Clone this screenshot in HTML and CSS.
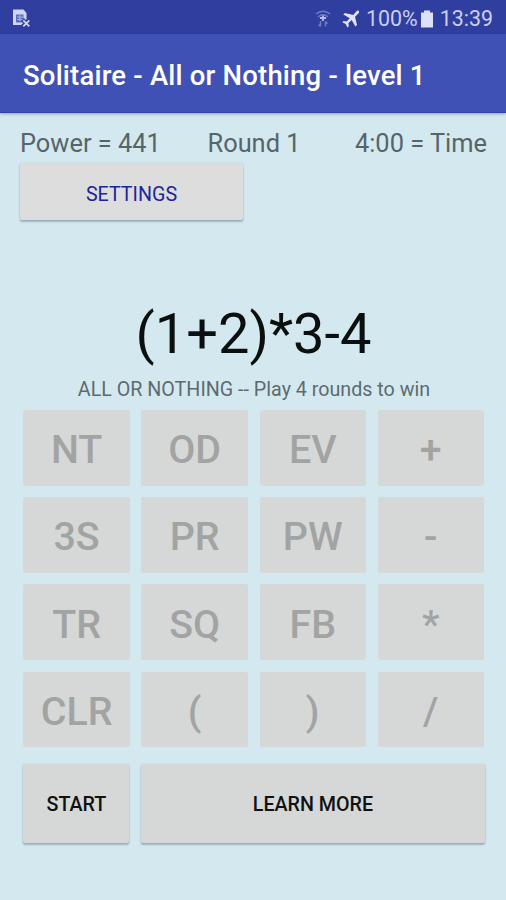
FILE: index.html
```html
<!DOCTYPE html>
<html lang="en">
<head>
<meta charset="utf-8">
<title>Solitaire - All or Nothing - level 1</title>
<link rel="stylesheet" href="styles.css">
</head>
<body>
<div class="status">
  <svg class="sim" width="18" height="20" viewBox="0 0 18 20">
    <path fill="#cfd5f2" d="M1 .5h10.500L14.500 4v12H1z"/>
    <path fill="#5f6bb8" d="M4 5.500h7.500v8H4z"/>
    <path fill="#aab3e0" d="M5 7.500h6v1H5zM5 10h6v1H5zM7.300 6h1v6h-1z"/>
    <path stroke="#303f9f" stroke-width="4" d="M10.500 10.500l7 7M17.500 10.500l-7 7"/>
    <path stroke="#cfd5f2" stroke-width="1.800" d="M11.300 11.300l6 6M17.300 11.300l-6 6"/>
  </svg>
  <div class="status-right">
    <svg class="wifi" width="16" height="18" viewBox="0 0 16 18" fill="none" stroke="#6f7bc4" stroke-width="1.500">
      <path d="M1 4q7-5.500 14 0M3.200 6.800q4.800-4 9.600 0"/>
      <path stroke="#b7bfeb" stroke-width="1.800" d="M5 8h6M8 5.500v5.500"/>
      <path d="M5.500 11v5.500m-2-2l2 2M10.500 16.500v-5m2 2l-2-2"/>
    </svg>
    <svg class="plane" width="18" height="18" viewBox="0 0 18 18">
      <path fill="#e0e4f8" d="M16.600.7c.9.800.6 2-.3 2.900L13 6.700l2 8.300-1.500 1.500-3.900-6.400-3.300 3.200.5 3-1.300 1.200-1.800-3.400L.4 12.300l1.200-1.200 3 .4 3.200-3.300L1.300 4.500 2.800 3l8.400 1.900 3.100-3.300c.8-.9 1.600-1.500 2.300-.9z"/>
    </svg>
    <span class="percent">100%</span>
    <svg class="battery" width="12" height="18" viewBox="0 0 12 18"><path fill="#dde2f8" d="M0 2.500h3V.5h6v2h3v15H0z"/></svg>
    <span class="clock">13:39</span>
  </div>
</div>
<header class="bar"><h1>Solitaire - All or Nothing - level 1</h1></header>
<main>
  <div class="stats"><span class="power">Power = 441</span><span class="round">Round 1</span><span class="time">4:00 = Time</span></div>
  <button class="raised settings">SETTINGS</button>
  <div class="expression">(1+2)*3-4</div>
  <p class="hint">ALL OR NOTHING -- Play 4 rounds to win</p>
  <div class="keys">
    <button disabled>NT</button><button disabled>OD</button><button disabled>EV</button><button disabled>+</button>
    <button disabled>3S</button><button disabled>PR</button><button disabled>PW</button><button disabled>-</button>
    <button disabled>TR</button><button disabled>SQ</button><button disabled>FB</button><button disabled>*</button>
    <button disabled>CLR</button><button disabled>(</button><button disabled>)</button><button disabled>/</button>
  </div>
  <div class="actions"><button class="raised">START</button><button class="raised learn">LEARN MORE</button></div>
</main>
</body>
</html>
```
FILE: styles.css
```css
* { box-sizing: border-box; }
body {
  margin: 0;
  height: 900px;
  overflow: hidden;
  background: #d4e9ef;
  font-family: Roboto, sans-serif;
}
.status {
  display: flex;
  justify-content: space-between;
  align-items: center;
  height: 34px;
  padding: 3px 13px 0 12px;
  background: #303f9f;
  color: #c9cff0;
  font-size: 21.4px;
}
.status svg { display: block; flex: none; }
.status-right { display: flex; align-items: center; }
.plane { margin: 0 6px 0 11px; }
.battery { margin: 0 6.500px 0 3.500px; }
.bar {
  position: relative;
  height: 79px;
  padding-left: 23px;
  background: #3f51b5;
  border-bottom: 1px solid #3141a5;
  box-shadow: 0 1px 3px rgba(0, 0, 0, .3);
}
h1 {
  margin: 0;
  color: #fff;
  font-size: 27.500px;
  font-weight: 500;
  letter-spacing: .2px;
  line-height: 83px;
  white-space: nowrap;
}
main { padding: 0 21px 0 20px; }
.stats {
  display: grid;
  grid-template-columns: 187.500px 1fr auto;
  height: 50px;
  margin-right: -2px;
  color: #56656a;
  font-size: 25.4px;
  line-height: 60px;
  white-space: nowrap;
}
button {
  display: block;
  padding: 0;
  border: 0;
  border-radius: 2px;
  background: #d6d8d7;
  font-family: inherit;
  font-weight: 500;
}
.raised {
  padding-top: 2px;
  color: #101212;
  font-size: 19.7px;
  box-shadow: 0 2px 2px rgba(70, 95, 110, .38), 0 0 2px rgba(70, 95, 110, .2);
}
.settings {
  width: 223px;
  height: 57px;
  padding-top: 5px;
  background: #ddd;
  color: #1b259c;
  font-weight: 400;
}
.expression {
  height: 154px;
  padding: 81px 0 0 2px;
  color: #0c0f10;
  font-size: 56px;
  line-height: 66px;
  text-align: center;
}
.hint {
  margin: 0;
  height: 36px;
  padding-left: 3px;
  color: #5d6b70;
  font-size: 19.7px;
  line-height: 32px;
  text-align: center;
}
.keys {
  display: grid;
  grid-template-columns: repeat(4, 1fr);
  grid-auto-rows: 75.5px;
  gap: 11.7px;
  margin: 0 1px 0 3.400px;
}
.keys button { color: #a2a4a3; font-size: 39.4px; padding-top: 4px; }
.actions {
  display: grid;
  grid-template-columns: 106px 1fr;
  column-gap: 11.5px;
  height: 78.500px;
  margin: 17px 0 0 3.400px;
}
```
